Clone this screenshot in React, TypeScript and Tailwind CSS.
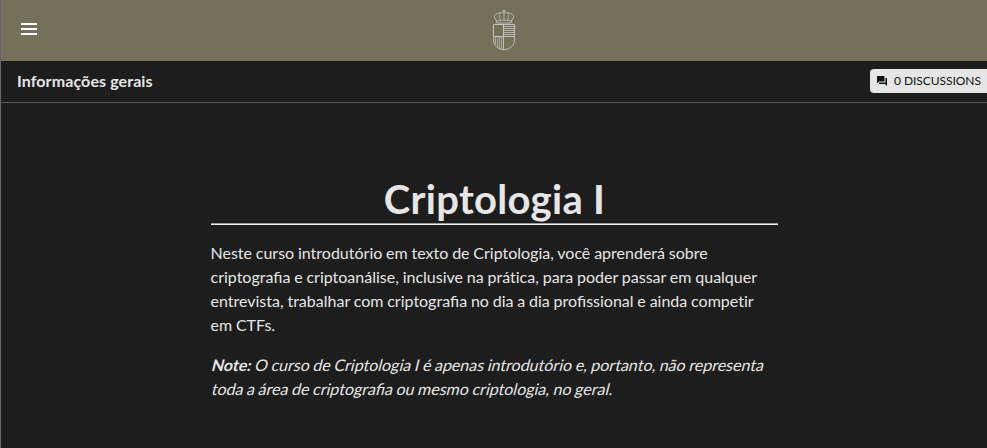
import type { ReactNode } from "react";
import { MdForum } from "react-icons/md";

function Crest() {
  return (
    <svg width="24" height="42" viewBox="0 0 24 42" fill="none" stroke="#c5c3bb" strokeWidth="1">
      <path d="M1.5 15.5H22.5V30.5C22.5 37 17.5 40.2 12 40.8C6.500 40.200 1.500 37 1.500 30.500Z" />
      <path d="M11.500 15.500V40.500M1.500 27.500H22.500" />
      <path d="M12 17.500H22M12 19.500H22M12 21.500H22M12 23.500H22M12 25.500H22" strokeWidth=".8" />
      <path d="M3.500 28V35M5.500 28V37.500M7.500 28V39M9.500 28V40" strokeWidth=".7" />
      <path d="M5 14L4 10.500C1 7.500 3 4.500 6 4.500C8.500 3.200 10.500 3.500 12 4.500C13.500 3.500 15.500 3.200 18 4.500C21 4.500 23 7.500 20 10.500L19 14Z" strokeWidth=".9" />
      <path d="M5 12Q12 10 19 12M12 4.500V11M8 4.500Q6.500 8 8.500 11M16 4.500Q17.500 8 15.500 11" strokeWidth=".8" />
      <path d="M12 .5V4.500M10.500 2H13.500" />
    </svg>
  );
}

function Slanted({ children }: { children: ReactNode }) {
  return <span className="block h-6 origin-[0_17px] skew-x-[-14deg] whitespace-nowrap">{children}</span>;
}

export default function App() {
  return (
    <div className="h-[448px] overflow-hidden border-l border-[#66666a] bg-[#1d1d1d] font-['Lato',sans-serif] text-[#e6e6e6]">
      <header className="flex h-[61px] items-start bg-[#757059] pl-5">
        <button aria-label="Menu" className="mt-[23px] flex h-3 w-4 flex-col justify-between">
          <span className="h-0.5 w-full bg-white" />
          <span className="h-0.5 w-full bg-white" />
          <span className="h-0.5 w-full bg-white" />
        </button>
        <div className="mt-[9px] ml-[455px]">
          <Crest />
        </div>
      </header>
      <div className="flex h-[42px] items-center justify-between border-b border-[#5a5a5a] pl-4">
        <h2 className="pb-0.5 text-base font-bold tracking-[0.1px]">Informações gerais</h2>
        <button className="mb-px flex h-6 w-[117px] items-center gap-1.5 rounded-l bg-[#e6e6e6] pl-1.5 text-xs whitespace-nowrap text-[#111]">
          <MdForum size={12} className="shrink-0" />
          <span className="tracking-[-0.05px]">0 DISCUSSIONS</span>
        </button>
      </div>
      <main className="mx-auto w-[567px] pt-[72px]">
        <h1 className="border-b border-[#f0f0f0] pb-px pl-px text-center text-[40px] leading-[48px] font-bold tracking-[0.3px] shadow-[inset_0_-1px_0_#999]">Criptologia I</h1>
        <p className="mt-4 text-base [word-spacing:-0.28px]">
          Neste curso introdutório em texto de Criptologia, você aprenderá sobre criptografia e criptoanálise, inclusive na{" "}
          <span className="[font-variant-ligatures:none]">prática</span>, para poder passar em qualquer entrevista, trabalhar com criptografia no dia a dia profissional e ainda{" "}
          <span className="[font-variant-ligatures:none]">competir</span> em CTFs.
        </p>
        <p className="mt-4 text-base [word-spacing:-0.5px]">
          <Slanted>
            <b>Note:</b> O curso de Criptologia I é apenas introdutório e, portanto, não representa
          </Slanted>
          <Slanted>toda a área de criptografia ou mesmo criptologia, no geral.</Slanted>
        </p>
      </main>
    </div>
  );
}
